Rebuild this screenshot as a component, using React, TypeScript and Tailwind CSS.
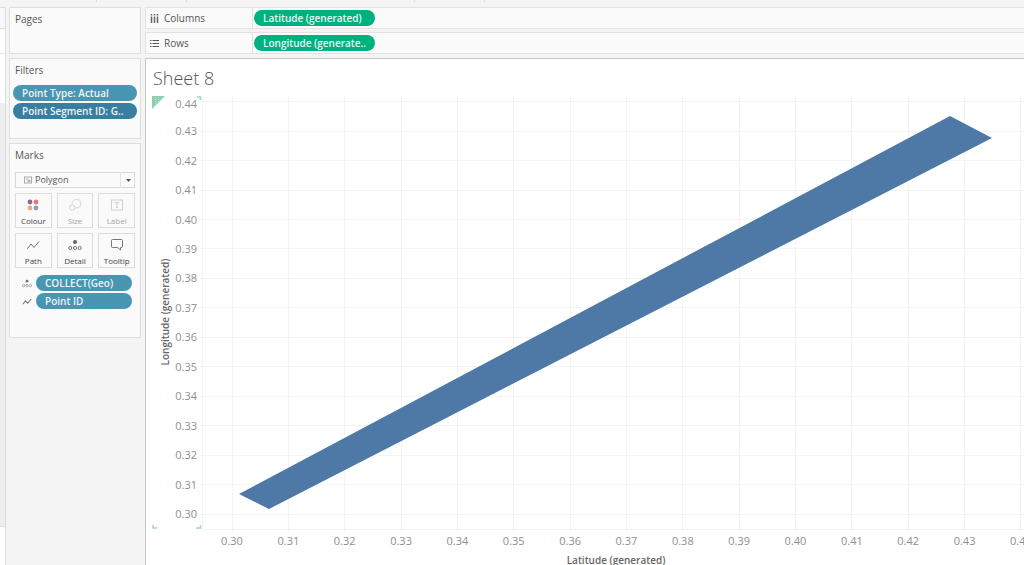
import type { ReactNode } from 'react';

interface Mark {
  name: string;
  icon: ReactNode;
  disabled?: boolean;
}

const PathIcon = () => (
  <svg width="14" height="12" viewBox="0 0 14 12" fill="none" stroke="#777777">
    <path d="M1 9.5 L2 9 L5 5 L8 8.5 L13 2.5" />
  </svg>
);

const DetailIcon = () => (
  <svg width="14" height="12" viewBox="0 0 14 12" fill="none" stroke="#777777">
    <circle cx="7" cy="3" r="2" fill="#666666" stroke="none" />
    <circle cx="2.3" cy="9" r="1.6" />
    <circle cx="7" cy="9" r="1.6" />
    <circle cx="11.7" cy="9" r="1.6" />
  </svg>
);

const marks: Mark[] = [
  {
    name: 'Colour',
    icon: (
      <svg width="12" height="12" viewBox="0 0 12 12">
        <circle cx="3" cy="3" r="2.4" fill="#8a6c93" />
        <circle cx="9" cy="3" r="2.4" fill="#fb7078" />
        <circle cx="3" cy="9" r="2.4" fill="#f7a676" />
        <circle cx="9" cy="9" r="2.4" fill="#7fa3ca" />
      </svg>
    ),
  },
  {
    name: 'Size',
    disabled: true,
    icon: (
      <svg width="14" height="12" viewBox="0 0 14 12" fill="none" stroke="#d4d4d4">
        <path d="M4.3 5.5 A4.3 4.3 0 1 1 7.5 8.9" />
        <circle cx="4.2" cy="8.5" r="2.7" />
      </svg>
    ),
  },
  {
    name: 'Label',
    disabled: true,
    icon: (
      <svg width="12" height="12" viewBox="0 0 12 12" fill="none" stroke="#d0d0d0">
        <rect x="0.5" y="1" width="11" height="10" />
        <path d="M4 4.5 V3.5 H8 V4.5 M6 3.5 V8.5 M5 8.5 H7" />
      </svg>
    ),
  },
  { name: 'Path', icon: <PathIcon /> },
  { name: 'Detail', icon: <DetailIcon /> },
  {
    name: 'Tooltip',
    icon: (
      <svg width="12" height="12" viewBox="0 0 12 12" fill="none" stroke="#777777">
        <path d="M1.5 0.5 H10.5 Q11.5 0.5 11.5 1.5 V7.5 Q11.5 8.5 10.5 8.5 H9.5 V11 L6.5 8.5 H1.5 Q0.5 8.5 0.5 7.5 V1.5 Q0.5 0.5 1.5 0.5 Z" />
      </svg>
    ),
  },
];

const toolbarTicks = ['w-[97px]', 'w-[90px]', 'w-[228px]', 'w-[70px]'];

// Position of the first tick and distance between ticks, in chart pixels
const X_START = 86;
const X_STEP = 56.35;
const Y_START = 455;
const Y_STEP = 29.45;
const ticks = Array.from({ length: 15 }, (_, i) => i);

function Panel({ title, className, children }: { title: string; className: string; children?: ReactNode }) {
  return (
    <section className={`border border-[#dedede] bg-[#fafafa] px-[5px] text-[#555555] ${className}`}>
      <h2 className="text-[10px] leading-4">{title}</h2>
      {children}
    </section>
  );
}

function Shelf({ name, field, icon }: { name: string; field: string; icon: ReactNode }) {
  return (
    <div className="flex h-[22px] items-stretch border border-r-0 border-[#e2e2e2] bg-[#fafafa]">
      <div className="flex w-[107px] items-center gap-[5px] border-r border-[#e2e2e2] pl-1 text-[10px] text-[#555555]">
        {icon}
        <span>{name}</span>
      </div>
      <button
        type="button"
        className="ml-px flex h-4 w-[121px] items-center self-center rounded-full bg-[#00b180] pl-[9px] text-[10px] font-semibold whitespace-nowrap text-[#e8f8f2]"
      >
        {field}
      </button>
    </div>
  );
}

function Chart() {
  return (
    <svg
      role="img"
      aria-label="Longitude against latitude"
      className="block h-[510px] w-full"
      fontFamily="'Open Sans', 'Noto Sans', sans-serif"
    >
      {/* Axis selection handles */}
      <path d="M6 37 H19 L6 50 Z" fill="#8fceb0" />
      <path d="M9.5 38 V45 M12.5 38 V43" stroke="#b9e0cd" strokeDasharray="1 1" />
      <path d="M51 38 H54.5 V41 M7 466 V469 H11 M50 469 H54.5 V466" fill="none" stroke="#a3d6be" strokeWidth="1.5" />

      {/* Grid */}
      <g stroke="#f4f4f4" shapeRendering="crispEdges">
        <line x1="56" y1="37" x2="56" y2="470" />
        <line x1="56" y1="470" x2="100%" y2="470" />
        {ticks.map((i) => (
          <g key={i}>
            <line x1={X_START + i * X_STEP} y1="37" x2={X_START + i * X_STEP} y2="473" />
            <line x1="54" y1={Y_START - i * Y_STEP} x2="100%" y2={Y_START - i * Y_STEP} />
          </g>
        ))}
      </g>

      <polygon points="93,435 804,57 846,79 123,450" fill="#4e79a7" />

      <g fontSize="11" fill="#8f8f8f">
        {ticks.map((i) => (
          <g key={i}>
            <text x="51" y={Math.max(49, Y_START - i * Y_STEP + 4)} textAnchor="end">
              {(0.3 + i / 100).toFixed(2)}
            </text>
            <text x={X_START + i * X_STEP} y="486" textAnchor="middle">
              {(0.3 + i / 100).toFixed(2)}
            </text>
          </g>
        ))}
      </g>

      <g fontSize="10" fontWeight="600" fill="#666666" textAnchor="middle">
        <text transform="translate(23 253) rotate(-90)">Longitude (generated)</text>
        <text x="470" y="505">Latitude (generated)</text>
      </g>
    </svg>
  );
}

export default function App() {
  return (
    <div className="flex h-screen flex-col overflow-hidden bg-[#f4f4f4] font-['Open_Sans','Noto_Sans',sans-serif]">
      {/* Toolbar edge */}
      <div className="flex h-[7px] shrink-0 items-start">
        {toolbarTicks.map((width) => (
          <div key={width} className={`h-0.5 border-r border-[#dcdcdc] ${width}`} />
        ))}
      </div>

      <div className="flex min-h-0 flex-1">
        {/* Data pane edge */}
        <div className="flex w-1.5 shrink-0 flex-col border-r border-[#dddddd] bg-white">
          <div className="h-[22px] border-y border-[#dddddd] bg-[#f7f7f7]" />
          <div className="h-[25px] border-b border-[#e8e8e8]" />
          <div className="h-[49px]" />
          <div className="h-[424px] border-b border-[#dddddd] bg-[#eeeeee]" />
        </div>

        {/* Cards */}
        <aside className="flex w-[139px] shrink-0 flex-col gap-1 pr-1 pl-[3px]">
          <Panel title="Pages" className="h-[47px] pt-[3px]" />

          <Panel title="Filters" className="h-[81px] pt-[3px]">
            <div className="-mx-0.5 mt-[7px] flex flex-col gap-0.5 text-[10px] font-semibold text-[#edf5f8]">
              <button type="button" className="flex h-4 items-center rounded-full bg-[#4996b2] pl-[9px] whitespace-nowrap">
                Point Type: Actual
              </button>
              <button type="button" className="flex h-4 items-center rounded-full bg-[#387f9f] pl-[9px] whitespace-nowrap">
                Point Segment ID: G..
              </button>
            </div>
          </Panel>

          <Panel title="Marks" className="h-[195px] pt-[3px]">
            <div className="relative mt-[9px]">
              <select
                aria-label="Mark type"
                className="block h-4 w-full appearance-none rounded-none border border-[#d8d8d8] bg-[#fafafa] pl-[19px] text-[9px] leading-3"
              >
                <option>Polygon</option>
              </select>
              <svg className="pointer-events-none absolute top-1 left-[9px]" width="8" height="8" viewBox="0 0 8 8" fill="none" stroke="#aaaaaa">
                <rect x="0.5" y="1" width="7" height="6" />
                <path d="M2 3 H4 M4 5.5 V4 H6 V5.5 Z" />
              </svg>
              <div className="pointer-events-none absolute inset-y-0 right-0 flex w-[15px] items-center justify-center border-l border-[#e4e4e4]">
                <svg width="5" height="3" viewBox="0 0 5 3">
                  <path d="M0 0 H5 L2.5 3 Z" fill="#555555" />
                </svg>
              </div>
            </div>

            <div className="mt-[5px] grid grid-cols-3 gap-[5px]">
              {marks.map((mark) => (
                <button
                  key={mark.name}
                  type="button"
                  disabled={mark.disabled}
                  className="flex h-[35px] flex-col items-center gap-1 border border-[#dcdcdc] pt-[5px] text-[8px] leading-3 text-[#444444] disabled:text-[#a5a5a5]"
                >
                  {mark.icon}
                  {mark.name}
                </button>
              ))}
            </div>

            <ul className="mt-[7px] flex flex-col gap-0.5 text-[10px] font-semibold">
              <li className="flex items-center gap-1 pl-[7px]">
                <svg width="10" height="9" viewBox="0 0 14 12" fill="none" stroke="#888888">
                  <circle cx="7" cy="2.7" r="2" fill="#777777" stroke="none" />
                  <circle cx="2.3" cy="9" r="1.7" />
                  <circle cx="7" cy="9" r="1.7" />
                  <circle cx="11.7" cy="9" r="1.7" />
                </svg>
                <button type="button" className="mr-[3px] flex h-4 flex-1 items-center rounded-full bg-[#4996b2] pl-[9px] text-[#edf5f8]">
                  COLLECT(Geo)
                </button>
              </li>
              <li className="flex items-center gap-1 pl-[7px]">
                <svg width="10" height="9" viewBox="0 0 14 12" fill="none" stroke="#777777">
                  <path d="M1 9.5 L2 9 L5 5 L8 8.5 L13 2.5" strokeWidth="1.5" />
                </svg>
                <button type="button" className="mr-[3px] flex h-4 flex-1 items-center rounded-full bg-[#4996b2] pl-[9px] text-[#edf5f8]">
                  Point ID
                </button>
              </li>
            </ul>
          </Panel>
        </aside>

        <main className="flex min-w-0 flex-1 flex-col">
          <div className="mb-1 flex flex-col gap-[3px]">
            <Shelf
              name="Columns"
              field="Latitude (generated)"
              icon={
                <svg width="9" height="9" viewBox="0 0 9 9" stroke="#666666" strokeWidth="1.5">
                  <path d="M1.5 0 V1.5 M4.5 0 V1.5 M7.5 0 V1.5 M1.5 2.5 V9 M4.5 2.5 V9 M7.5 2.5 V9" />
                </svg>
              }
            />
            <Shelf
              name="Rows"
              field="Longitude (generate.."
              icon={
                <svg width="9" height="9" viewBox="0 0 9 9" stroke="#555555">
                  <path d="M0 1.5 H1.5 M2.5 1.5 H9 M0 4.5 H1.5 M2.5 4.5 H9 M0 7.5 H1.5 M2.5 7.5 H9" />
                </svg>
              }
            />
          </div>

          <div className="relative flex-1 border-t border-l border-[#c8c8c8] bg-white">
            <h1 className="absolute top-[7px] left-[7px] text-lg leading-6 font-light text-[#555555]">Sheet 8</h1>
            <Chart />
          </div>
        </main>
      </div>
    </div>
  );
}
